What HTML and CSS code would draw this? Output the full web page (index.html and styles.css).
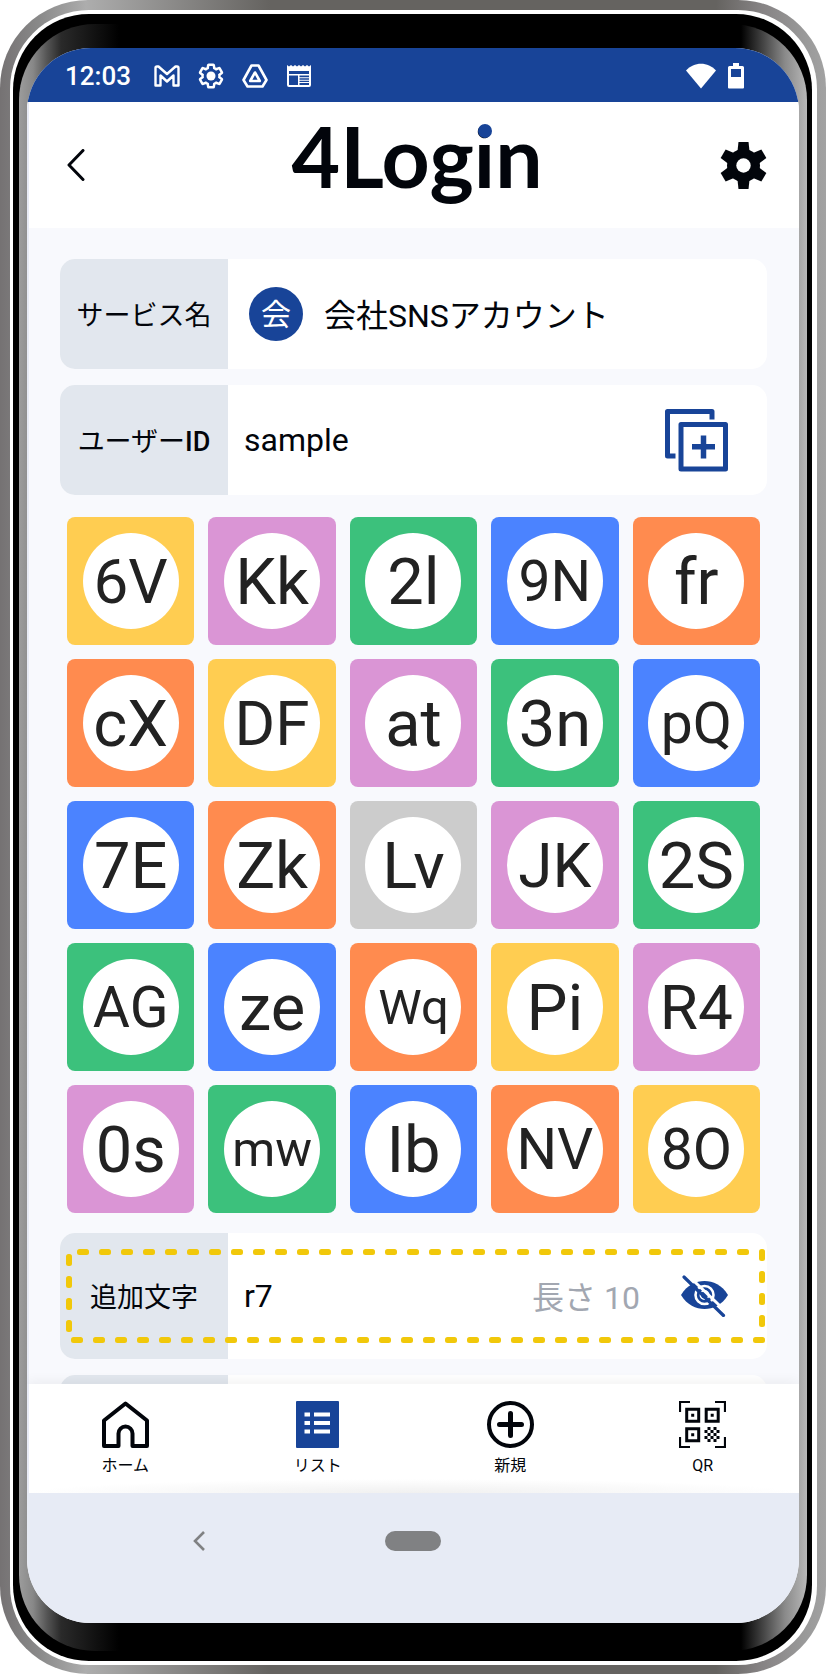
FILE: index.html
```html
<!DOCTYPE html>
<html lang="ja">
<head>
<meta charset="utf-8">
<meta name="viewport" content="width=device-width, initial-scale=1">
<title>4Login</title>
<link rel="stylesheet" href="styles.css">
</head>
<body>
<div class="phone"><div class="phone-rim"><div class="phone-bezel"><div class="phone-shade">
<div class="screen">

  <div class="status-bar">
    <span class="time">12:03</span>
    <svg class="status-icon" viewBox="0 0 26 26" aria-hidden="true"><path d="M1.500 22.500V5q0-1.500 1.500-1.500h1.500L13 11l8.500-7.500H23q1.500 0 1.500 1.500v17.500h-5V12.500L13 18.500l-6.500-6v10z" fill="none" stroke="#fff" stroke-width="2.400" stroke-linejoin="round"/></svg>
    <svg class="status-icon" viewBox="0.500 0.500 23 23" aria-hidden="true"><path d="M19.430 12.980c.04-.32.07-.64.07-.98s-.03-.66-.07-.98l2.110-1.650c.19-.15.24-.42.12-.64l-2-3.460c-.09-.16-.26-.25-.44-.25-.06 0-.12.01-.17.03l-2.490 1c-.52-.4-1.080-.73-1.690-.98l-.38-2.650C14.460 2.180 14.250 2 14 2h-4c-.25 0-.46.18-.49.42l-.38 2.650c-.61.25-1.170.59-1.690.98l-2.490-1c-.06-.02-.12-.03-.18-.03-.17 0-.34.09-.43.25l-2 3.460c-.13.22-.07.49.12.64l2.110 1.650c-.04.32-.07.65-.07.98s.03.66.07.98l-2.110 1.650c-.19.15-.24.42-.12.64l2 3.460c.09.16.26.25.44.25.06 0 .12-.01.17-.03l2.490-1c.52.4 1.080.73 1.690.98l.38 2.650c.03.24.24.42.49.42h4c.25 0 .46-.18.49-.42l.38-2.650c.61-.25 1.170-.59 1.690-.98l2.490 1c.06.02.12.03.18.03.17 0 .34-.09.43-.25l2-3.460c.12-.22.07-.49-.12-.64z" fill="none" stroke="#fff" stroke-width="2.200"/><circle cx="12" cy="12" r="4" fill="#fff"/></svg>
    <svg class="status-icon" viewBox="0 0 26 26" aria-hidden="true"><path d="M9.500 2.500h7L24.500 17l-4 6.500h-15l-4-6.500z" fill="none" stroke="#fff" stroke-width="2.600" stroke-linejoin="round"/><path d="M13 9.500l4.800 8.500H8.200z" fill="none" stroke="#fff" stroke-width="2.600" stroke-linejoin="round"/></svg>
    <svg class="status-icon" viewBox="0 0 26 26" aria-hidden="true"><path fill="#fff" fill-rule="evenodd" d="M1 2l2 1.500L5 2l2 1.500L9 2l2 1.500L13 2l2 1.500L17 2l2 1.500L21 2l2 1.500L25 2v20q0 2-2 2H3q-2 0-2-2zM3 8v3h20V8zM3 12.500V22h9v-9.500zM13.500 12.500v1.800H23v-1.800zM13.500 15.300v1.400H23v-1.400zM13.500 17.700v1.400H23v-1.400zM13.500 20.100V22H23v-1.900z"/></svg>
    <svg class="wifi-icon" viewBox="0 0 30 26" aria-hidden="true"><path d="M0 7.500C8-1.500 22-1.500 30 7.500L15 25.500z" fill="#fff"/></svg>
    <svg class="battery-icon" viewBox="0 0 16 26" aria-hidden="true"><path fill="#fff" fill-rule="evenodd" d="M5 0h6v3h3.500q1.500 0 1.500 1.500v20q0 1-1 1H1q-1 0-1-1v-20Q0 3 1.500 3H5zM3 6v8h10V6z"/></svg>
  </div>

  <header class="app-header">
    <button class="icon-button" type="button" aria-label="戻る"><svg class="back-icon" viewBox="0 0 18 32" aria-hidden="true"><path d="M16 1.500L2 16l14 14.500" fill="none" stroke="#02050b" stroke-width="3" stroke-linecap="round" stroke-linejoin="round"/></svg></button>
    <h1 class="logo">4Log<span class="logo-i">i</span>n</h1>
    <button class="icon-button" type="button" aria-label="設定"><svg class="gear-icon" viewBox="-23.500 -23.500 47 47" aria-hidden="true"><g fill="#02050b"><circle r="16.500"/><path id="tooth" d="M-5-23.500H5L6.500-10h-13z"/><use href="#tooth" transform="rotate(60)"/><use href="#tooth" transform="rotate(120)"/><use href="#tooth" transform="rotate(180)"/><use href="#tooth" transform="rotate(240)"/><use href="#tooth" transform="rotate(300)"/></g><circle r="7.200" fill="#fff"/></svg></button>
  </header>

  <main class="content">
    <div class="field">
      <label class="field-label" for="service">サービス名</label>
      <div class="field-body">
        <span class="avatar">会</span>
        <input class="field-input field-input-ja" id="service" type="text" value="会社SNSアカウント">
      </div>
    </div>
    <div class="field">
      <label class="field-label" for="user">ユーザー<b class="latin">ID</b></label>
      <div class="field-body field-body-text">
        <input class="field-input" id="user" type="text" value="sample">
        <button class="icon-button" type="button" aria-label="コピー"><svg class="copy-icon" viewBox="0 0 63 63" aria-hidden="true"><path d="M10.500 47H2.500V2.500H47v8" fill="none" stroke="#184498" stroke-width="5" stroke-linejoin="round"/><path d="M16 15.500h44.500v44.500H16z" fill="none" stroke="#184498" stroke-width="5" stroke-linejoin="round"/><path d="M27 37.800h23M38.500 26.500v23" stroke="#184498" stroke-width="5.500"/></svg></button>
      </div>
    </div>

    <div class="matrix">
      <button class="tile yellow" type="button"><span class="disc md">6V</span></button>
      <button class="tile pink" type="button"><span class="disc">Kk</span></button>
      <button class="tile green" type="button"><span class="disc">2l</span></button>
      <button class="tile blue" type="button"><span class="disc sm">9N</span></button>
      <button class="tile orange" type="button"><span class="disc">fr</span></button>
      <button class="tile orange" type="button"><span class="disc">cX</span></button>
      <button class="tile yellow" type="button"><span class="disc md">DF</span></button>
      <button class="tile pink" type="button"><span class="disc">at</span></button>
      <button class="tile green" type="button"><span class="disc">3n</span></button>
      <button class="tile blue" type="button"><span class="disc sm">pQ</span></button>
      <button class="tile blue" type="button"><span class="disc">7E</span></button>
      <button class="tile orange" type="button"><span class="disc">Zk</span></button>
      <button class="tile gray" type="button"><span class="disc">Lv</span></button>
      <button class="tile pink" type="button"><span class="disc md">JK</span></button>
      <button class="tile green" type="button"><span class="disc">2S</span></button>
      <button class="tile green" type="button"><span class="disc sm">AG</span></button>
      <button class="tile blue" type="button"><span class="disc">ze</span></button>
      <button class="tile orange" type="button"><span class="disc xs">Wq</span></button>
      <button class="tile yellow" type="button"><span class="disc">Pi</span></button>
      <button class="tile pink" type="button"><span class="disc md">R4</span></button>
      <button class="tile pink" type="button"><span class="disc">0s</span></button>
      <button class="tile green" type="button"><span class="disc xs">mw</span></button>
      <button class="tile blue" type="button"><span class="disc">Ib</span></button>
      <button class="tile orange" type="button"><span class="disc sm">NV</span></button>
      <button class="tile yellow" type="button"><span class="disc sm">8O</span></button>
    </div>

    <div class="field field-tall">
      <label class="field-label" for="extra">追加文字</label>
      <div class="field-body field-body-text">
        <input class="field-input" id="extra" type="text" value="r7">
        <span class="length">長さ 10</span>
        <button class="icon-button" type="button" aria-label="表示切替"><svg class="eye-icon" viewBox="0 0 47 42" aria-hidden="true"><path d="M0 20C6 10 15 6 23.500 6S41 10 47 20C41 30 32 34 23.500 34S6 30 0 20z" fill="#184498"/><circle cx="23.500" cy="20" r="9" fill="none" stroke="#fff" stroke-width="2.600"/><circle cx="23.500" cy="20" r="4.200" fill="none" stroke="#fff" stroke-width="1.600"/><path d="M6-.5l41 39" stroke="#fff" stroke-width="3"/><path d="M3 2l39.500 38.500" stroke="#184498" stroke-width="3.200" stroke-linecap="round"/></svg></button>
      </div>
      <svg class="highlight" aria-hidden="true">
        <defs>
          <pattern id="dash-top" x="11" y="0" width="22" height="6" patternUnits="userSpaceOnUse"><rect width="12" height="6" rx="2.500" fill="#f1c80a"/></pattern>
          <pattern id="dash-bottom" x="5" y="0" width="22" height="6" patternUnits="userSpaceOnUse"><rect width="12" height="6" rx="2.500" fill="#f1c80a"/></pattern>
          <pattern id="dash-left" x="0" y="5" width="6" height="22" patternUnits="userSpaceOnUse"><rect width="6" height="12" rx="2.500" fill="#f1c80a"/></pattern>
          <pattern id="dash-right" x="0" y="0" width="6" height="22" patternUnits="userSpaceOnUse"><rect width="6" height="12" rx="2.500" fill="#f1c80a"/></pattern>
        </defs>
        <svg width="98%" height="6"><rect x="6" width="100%" height="6" fill="url(#dash-top)"/></svg>
        <svg y="100%" overflow="visible"><g transform="translate(0 -6)"><rect width="100%" height="6" fill="url(#dash-bottom)"/></g></svg>
        <rect width="6" height="90%" fill="url(#dash-left)"/>
        <svg x="100%" overflow="visible"><g transform="translate(-6 0)"><rect width="6" height="90%" fill="url(#dash-right)"/></g></svg>
      </svg>
    </div>
    <div class="field">
      <div class="field-label"></div>
      <div class="field-body"></div>
    </div>
  </main>

  <nav class="tab-bar">
    <a class="tab" href="#home"><svg class="tab-icon" viewBox="0 0 47 47" aria-hidden="true"><path d="M2 45V19.500L23.500 2.500 45 19.500V45H30.500V32.500a7 7 0 0 0-14 0V45z" fill="none" stroke="#02050b" stroke-width="4" stroke-linejoin="round"/></svg>ホーム</a>
    <a class="tab" href="#list"><svg class="tab-icon" viewBox="0 0 47 47" aria-hidden="true"><rect x="2" width="43" height="47" rx="1" fill="#184498"/><path d="M10.500 13.500H16M20 13.500h16M10.500 22H16M20 22h16M10.500 30.500H16M20 30.500h16" stroke="#fff" stroke-width="4.200"/></svg>リスト</a>
    <a class="tab" href="#new"><svg class="tab-icon" viewBox="0 0 47 47" aria-hidden="true"><circle cx="23.500" cy="23.500" r="21.500" fill="none" stroke="#02050b" stroke-width="4"/><path d="M12.500 23.500h22M23.500 12.500v22" stroke="#02050b" stroke-width="5" stroke-linecap="round"/></svg>新規</a>
    <a class="tab" href="#qr"><svg class="tab-icon" viewBox="0 0 47 47" aria-hidden="true"><g fill="none" stroke="#02050b"><path d="M11 1H1v10M36 1h10v10M1 36v10h10M46 36v10H36" stroke-width="2.200"/><path d="M7.700 8.200h12v12h-12zM27.200 8.200h12v12h-12zM7.700 27.700h12v12h-12z" stroke-width="3"/></g><g fill="#02050b"><path d="M12.200 12.700h3v3h-3zM31.700 12.700h3v3h-3zM12.200 32.200h3v3h-3z"/><path id="qr-row" d="M28.500 26h3v3h-3zM34.500 26h3v3h-3zM25.500 29h3v3h-3zM31.500 29h3v3h-3zM37.500 29h3v3h-3z"/><use href="#qr-row" y="6"/><path d="M28.500 38h3v3h-3zM34.500 38h3v3h-3z"/></g></svg>QR</a>
  </nav>

  <div class="system-bar">
    <button class="icon-button" type="button" aria-label="システム戻る"><svg class="system-back" viewBox="0 0 12 20" aria-hidden="true"><path d="M11 1L2 10l9 9" fill="none" stroke="#808183" stroke-width="2.600"/></svg></button>
    <button class="home-pill" type="button" aria-label="ホーム画面"></button>
    <span></span>
  </div>

</div>
</div></div></div></div>
</body>
</html>
```
FILE: styles.css
```css
* { box-sizing: border-box; }
body {
  margin: 0;
  background: #fff;
  color: #02050b;
  font-family: Roboto, "Noto Sans CJK JP", sans-serif;
}
button {
  margin: 0;
  padding: 0;
  border: 0;
  background: none;
  color: inherit;
  font: inherit;
}
svg { display: block; }

/* Device frame */
.phone {
  height: 100vh;
  min-height: 1200px;
  padding: 10px 9px 9px 10px;
  border-radius: 88px;
  background: linear-gradient(90deg, #757273 0, #8a8a8a 40px, #adadad 86px, #656360 270px, #656360 calc(100% - 110px), #858283 calc(100% - 66px), #9a9a9a calc(100% - 20px), #a2a2a2 100%);
}
.phone-rim {
  height: 100%;
  padding: 4px 5px 4px 3px;
  border-radius: 79px;
  background: #fff;
}
.phone-bezel {
  height: 100%;
  padding: 10px 5px 10px 6px;
  border-radius: 76px;
  background: #000;
}
.phone-shade {
  height: 100%;
  padding: 24px 8px 28px;
  border-radius: 76px;
  background: linear-gradient(90deg, #9c9c9c 0, #888 14px, #555 28px, #2a2a2a 42px, #000 100px, #000 calc(100% - 66px), #444 calc(100% - 44px), #8a8a8a calc(100% - 22px), #b8b8b8 100%);
}
.screen {
  display: flex;
  flex-direction: column;
  height: 100%;
  overflow: hidden;
  border-radius: 64px;
  background: #f8f9fd;
}

/* Status bar */
.status-bar {
  display: flex;
  align-items: center;
  gap: 18px;
  height: 54px;
  flex: none;
  padding: 2px 55px 0 38px;
  background: #184498;
  color: #fff;
}
.time {
  margin-right: 5px;
  font-size: 26px;
  font-weight: 500;
  line-height: 32px;
}
.status-icon { width: 26px; height: 26px; }
.wifi-icon { width: 30px; height: 26px; margin-left: auto; }
.battery-icon { width: 16px; height: 26px; margin-left: -6px; }

/* App header */
.app-header {
  display: flex;
  align-items: center;
  justify-content: space-between;
  height: 126px;
  flex: none;
  padding: 0 32px 0 38px;
  border-left: 2px solid #e8ebf5;
  background: #fff;
}
.app-header .icon-button { display: flex; width: 47px; }
.app-header .icon-button:last-child { justify-content: flex-end; }
.back-icon { width: 18px; height: 32px; }
.gear-icon { width: 47px; height: 47px; }
.logo {
  margin: 0;
  padding-bottom: 18px;
  font-family: Lato, sans-serif;
  font-size: 84px;
  font-weight: 700;
  line-height: 96px;
}
.logo-i { position: relative; }
.logo-i::before {
  content: "";
  position: absolute;
  top: 19px;
  left: 50%;
  width: 14px;
  height: 14px;
  margin-left: -7px;
  border-radius: 50%;
  background: #184498;
}

/* Fields */
.content {
  display: flex;
  flex: 1 1 0;
  flex-direction: column;
  gap: 16px;
  min-height: 0;
  overflow: hidden;
  padding: 31px 32px 0 31px;
  border-left: 2px solid #e8ebf5;
}
.field {
  position: relative;
  display: flex;
  flex: none;
  min-height: 110px;
  overflow: hidden;
  border-radius: 15px;
  background: #fff;
}
.field-tall { min-height: 126px; }
.field-label {
  display: flex;
  align-items: center;
  justify-content: center;
  width: 168px;
  flex: none;
  padding-top: 4px;
  background: #e2e7ee;
  font-size: 27px;
  line-height: 40px;
}
.latin { font-weight: 500; }
.field-body {
  display: flex;
  align-items: center;
  flex: 1;
  min-width: 0;
  gap: 21px;
  padding: 0 39px 0 21px;
}
.field-body-text { padding-left: 16px; }
.field-input {
  flex: 1;
  min-width: 0;
  padding: 0;
  border: 0;
  outline: 0;
  background: none;
  color: inherit;
  font: 32px/48px Roboto, "Noto Sans CJK JP", sans-serif;
}
.field-input-ja { padding-top: 4px; }
.avatar {
  width: 54px;
  height: 54px;
  flex: none;
  padding-top: 2px;
  border-radius: 50%;
  background: #184498;
  color: #fff;
  font-size: 30px;
  line-height: 52px;
  text-align: center;
}
.copy-icon { width: 63px; height: 63px; }
.eye-icon { width: 47px; height: 42px; }
.length {
  margin-right: 20px;
  padding-top: 4px;
  color: #a2a7b1;
  font-size: 32px;
  line-height: 48px;
}
.highlight {
  position: absolute;
  top: 16px;
  left: 6px;
  width: calc(100% - 8px);
  height: calc(100% - 32px);
}

/* Password matrix */
.matrix {
  display: grid;
  grid-template-columns: repeat(5, 1fr);
  grid-auto-rows: 128px;
  gap: 14px;
  flex: none;
  padding: 6px 7px 4px;
}
.tile {
  display: flex;
  align-items: center;
  justify-content: center;
  border-radius: 8px;
}
.disc {
  width: 96px;
  height: 96px;
  padding-top: 1px;
  border-radius: 50%;
  background: #fff;
  color: #222;
  font-size: 65px;
  line-height: 96px;
  text-align: center;
}
.md { font-size: 62px; }
.sm { font-size: 57px; }
.xs { font-size: 49px; }
.yellow { background: #ffcd51; }
.pink { background: #da95d5; }
.green { background: #3cc17c; }
.blue { background: #4b83ff; }
.orange { background: #ff8b4f; }
.gray { background: #ccc; }

/* Bottom bars */
.tab-bar {
  position: relative;
  display: flex;
  flex: none;
  padding: 17px 0;
  border-left: 2px solid #e8ebf5;
  background: radial-gradient(50% 14px at 50% 100%, #f0f0f0 0, #fff 100%) #fff;
  box-shadow: 0 -2px 12px rgba(0, 0, 0, .06);
}
.tab {
  display: flex;
  flex: 1;
  flex-direction: column;
  align-items: center;
  gap: 8px;
  color: inherit;
  font-size: 16px;
  line-height: 20px;
  text-decoration: none;
}
.tab-icon { width: 47px; height: 47px; }
.system-bar {
  position: relative;
  display: grid;
  grid-template-columns: 1fr 56px 1fr;
  align-items: start;
  height: 130px;
  flex: none;
  padding-top: 38px;
  background: #e7ebf5;
}
.system-bar .icon-button { justify-self: center; padding-right: 14px; }
.system-back { width: 12px; height: 20px; }
.home-pill {
  height: 20px;
  border-radius: 10px;
  background: #808183;
}
```
